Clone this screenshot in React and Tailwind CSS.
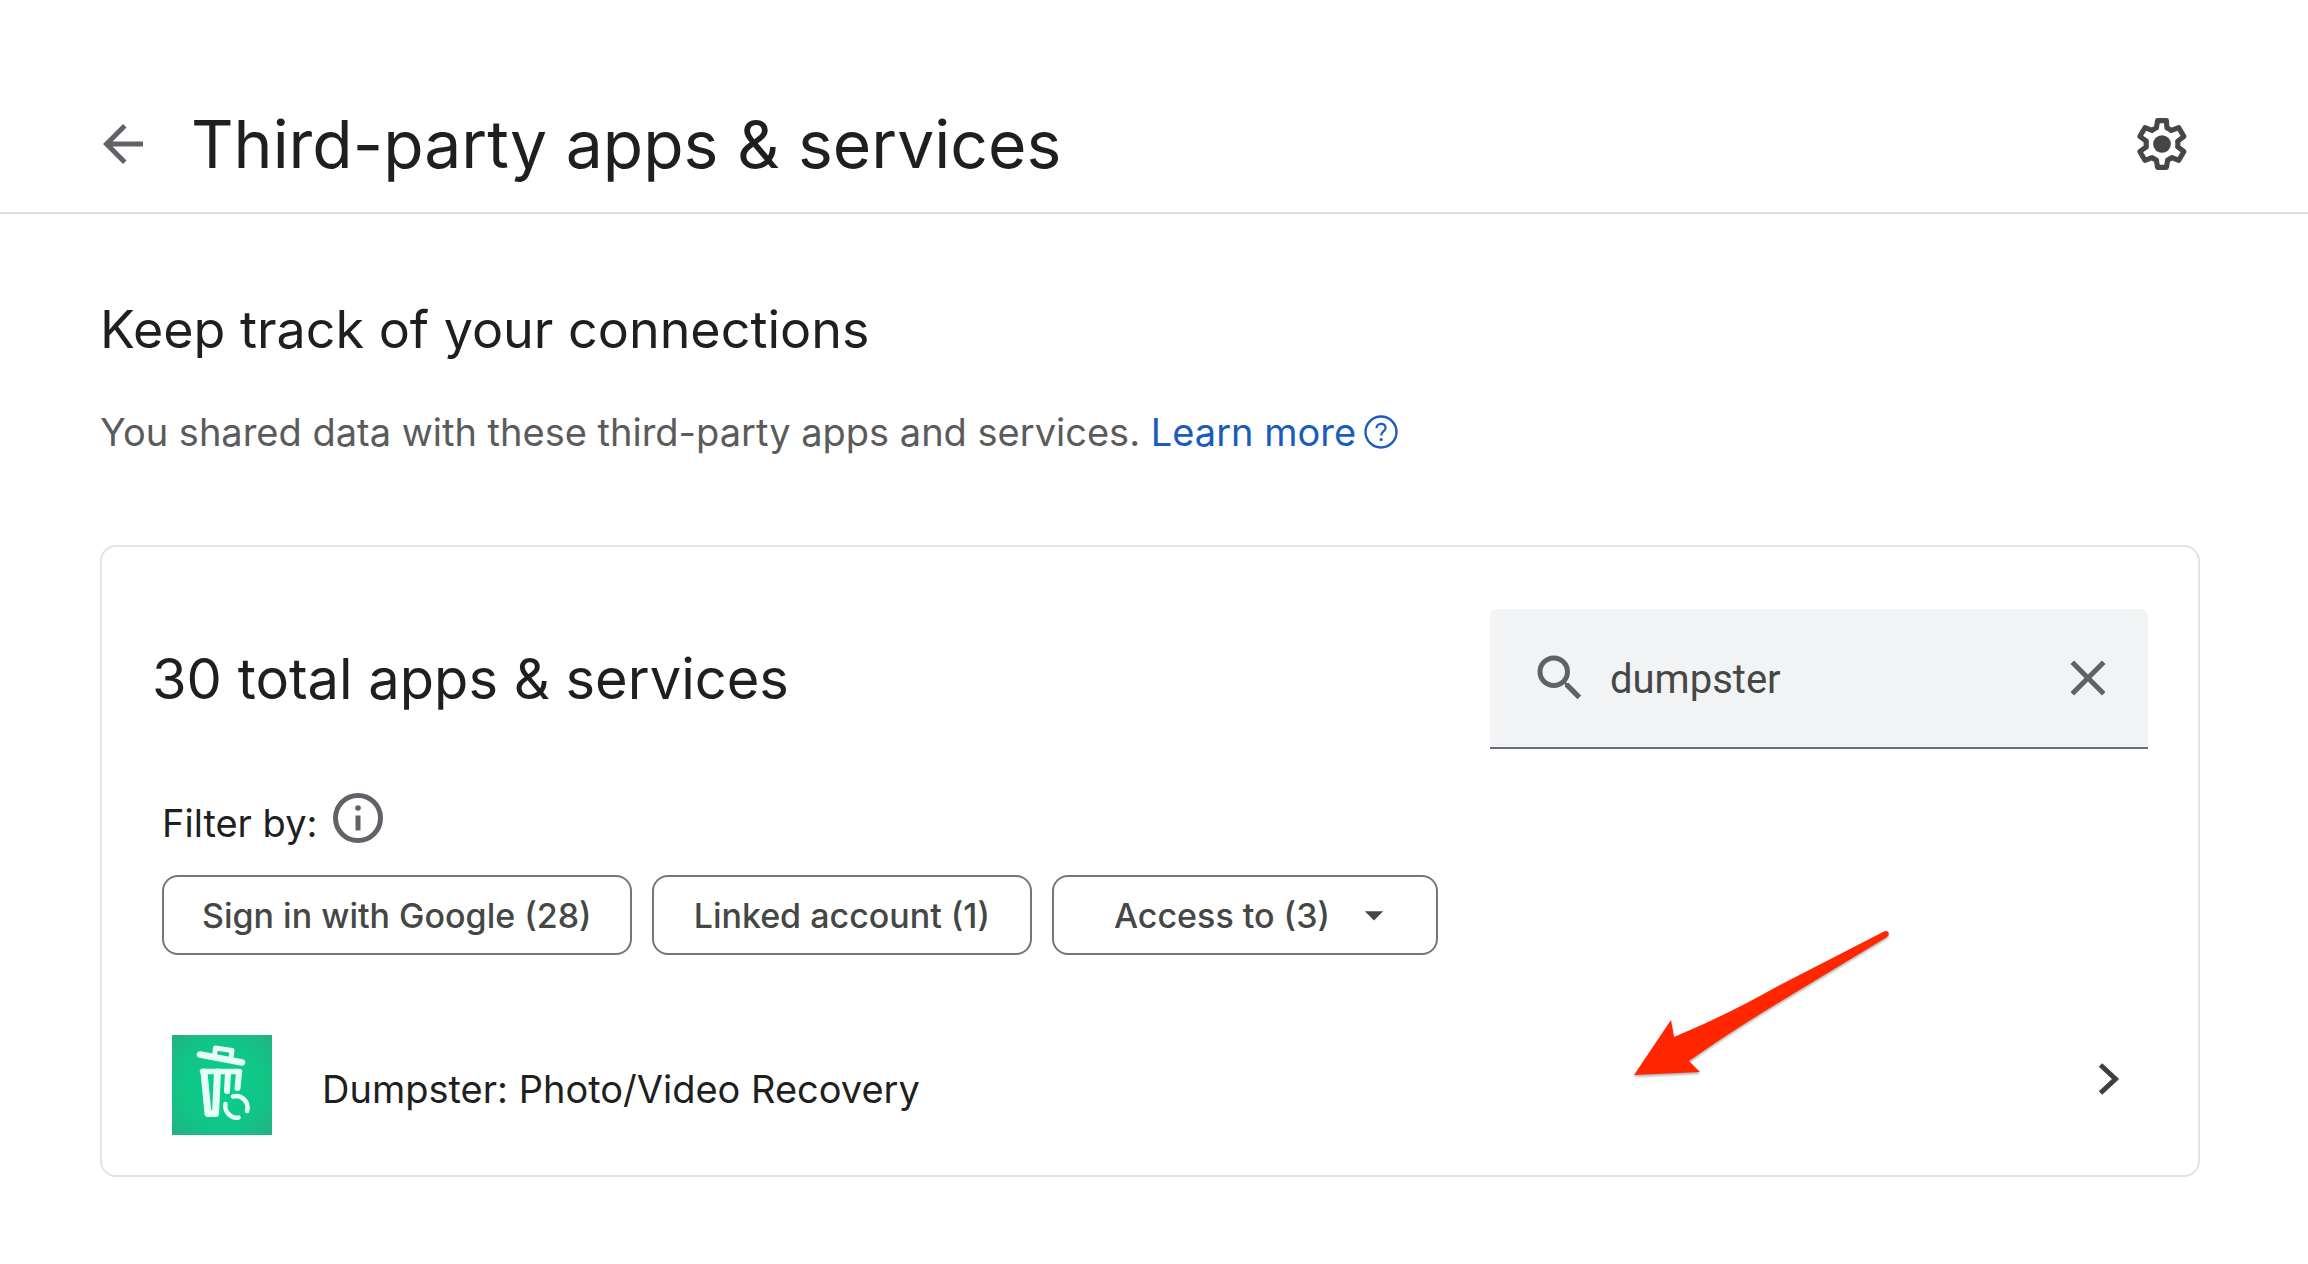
import React, { useState } from "react";
import { MdArrowBack, MdArrowDropDown, MdClose, MdSearch } from "react-icons/md";

function GearIcon() {
  return (
    <svg viewBox="0 0 24 24" className="h-14 w-14" aria-hidden="true">
      <path
        fill="none"
        stroke="currentColor"
        strokeWidth="2.2"
        strokeLinejoin="round"
        d="M18.7 13.2c.1-.4.1-.8.1-1.2s0-.8-.1-1.2l2.7-2-2.2-3.8-3.2 1.2c-.6-.5-1.2-.8-1.900-1.1L13.900 2h-3.800l-.5 3.100c-.7.3-1.300.6-1.900 1.100L4.700 5 2.500 8.800l2.800 2c-.1.400-.1.800-.1 1.200s0 .8.1 1.200l-2.800 2L4.700 19l3-1.200c.6.500 1.200.800 1.900 1.100l.5 3.100h3.800l.5-3.100c.7-.3 1.300-.6 1.900-1.100L19.200 19l2.200-3.800z"
      />
      <circle cx="12" cy="12" r="3.8" fill="currentColor" />
    </svg>
  );
}

function HelpIcon() {
  return (
    <svg viewBox="0 0 34 34" className="h-[34px] w-[34px]" fill="none" stroke="currentColor" aria-hidden="true">
      <circle cx="17" cy="17" r="15.500" strokeWidth="2.400" />
      <path d="M12.500 13.200c0-2.600 2-4.400 4.600-4.400s4.500 1.700 4.500 4c0 3.300-4.400 3.800-4.400 7.600" strokeWidth="2.200" />
      <circle cx="17.100" cy="24.600" r="1.600" fill="currentColor" stroke="none" />
    </svg>
  );
}

function InfoIcon() {
  return (
    <svg viewBox="0 0 50 50" className="h-[50px] w-[50px]" aria-hidden="true">
      <circle cx="25" cy="25" r="22.500" fill="none" stroke="currentColor" strokeWidth="5" />
      <circle cx="25" cy="15" r="2.800" fill="currentColor" />
      <rect x="22.500" y="22.500" width="5" height="15" fill="currentColor" />
    </svg>
  );
}

function DumpsterLogo() {
  return (
    <svg viewBox="0 0 100 100" className="h-[100px] w-[100px] shrink-0" aria-hidden="true">
      <defs>
        <radialGradient id="tile" cx="50%" cy="50%" r="70%">
          <stop offset="0%" stopColor="#08cf8c" />
          <stop offset="65%" stopColor="#12c486" />
          <stop offset="100%" stopColor="#25b083" />
        </radialGradient>
      </defs>
      <rect width="100" height="100" fill="url(#tile)" />
      <g fill="none" stroke="#e6fff6" strokeLinecap="round" strokeLinejoin="round">
        <path d="M28 19.500 70 27.500" strokeWidth="6.500" />
        <path d="M42.500 20 43.500 13 60 15.500 59 23" strokeWidth="5" />
        <path d="M30.500 36.500H67.500" strokeWidth="5.500" />
        <path d="M32 37 36 78.500H43.500L45.500 37" strokeWidth="7" />
        <path d="M56 38 55 56" strokeWidth="6" />
        <path d="M67 38 65.500 53" strokeWidth="6" />
        <path d="M61 61.500A11.500 11.500 0 0 1 75 76" strokeWidth="4.500" />
        <path d="M53.500 69A11.500 11.500 0 0 0 66.500 82.500" strokeWidth="4.500" />
      </g>
    </svg>
  );
}

function ChevronIcon() {
  return (
    <svg viewBox="0 0 22 34" className="h-[34px] w-[22px]" fill="none" stroke="currentColor" aria-hidden="true">
      <path d="M2.500 3 17.500 17 2.500 31" strokeWidth="5" />
    </svg>
  );
}

function PointerArrow() {
  return (
    <svg
      viewBox="1624 920 276 164"
      className="pointer-events-none absolute right-[298px] bottom-[90px] h-[164px] w-[276px] drop-shadow-[0_2px_1px_rgba(0,0,0,0.3)]"
      aria-hidden="true"
    >
      <path
        fill="#ff2600"
        d="M1634 1074 1671 1019 1674 1036Q1725 1015 1778 985L1884 930.500Q1887 929 1888.500 931.500 1889.500 934 1887 936L1778 1002Q1730 1031 1689 1060L1700 1071Z"
      />
    </svg>
  );
}

const chip =
  "flex h-20 items-center rounded-2xl border-2 border-[#747775] text-[34px] font-medium text-[#444746]";

export default function App() {
  const [query, setQuery] = useState("dumpster");

  return (
    <div className="bg-white font-['Inter',sans-serif] text-[#1f1f1f]">
      <header className="flex items-center border-b-2 border-[#dadce0] pt-[104px] pr-[118px] pb-7 pl-[93px]">
        <button type="button" aria-label="Back" className="text-[#5f6368]">
          <MdArrowBack size={60} />
        </button>
        <h1 className="ml-[38px] text-[66px] leading-[80px]">Third-party apps &amp; services</h1>
        <button type="button" aria-label="Settings" className="ml-auto text-[#444746]">
          <GearIcon />
        </button>
      </header>

      <main className="pt-[84px] pr-[108px] pb-[87px] pl-[100px]">
        <h2 className="text-[52px] leading-[64px]">Keep track of your connections</h2>
        <p className="mt-[46px] text-[38px] leading-[48px] text-[#5a5b5c]">
          You shared data with these third-party apps and services.{" "}
          <a href="#learn-more" className="inline-flex items-center gap-2 align-top text-[#1b5bbf]">
            Learn more
            <HelpIcon />
          </a>
        </p>

        <section className="relative mt-[89px] rounded-2xl border-2 border-[#e3e3e3] px-[50px] pt-[62px] pb-10">
          <div className="flex items-center justify-between">
            <h3 className="text-[56px] leading-[72px]">30 total apps &amp; services</h3>
            <div className="flex h-[140px] w-[658px] items-center rounded-t-lg border-b-2 border-[#6b6e72] bg-[#f1f3f4] pr-[30px] pl-10">
              <label htmlFor="app-search" aria-label="Search apps" className="text-[#5f6368]">
                <MdSearch size={60} />
              </label>
              <input
                id="app-search"
                type="text"
                value={query}
                onChange={(e) => setQuery(e.target.value)}
                className="ml-5 min-w-0 flex-1 bg-transparent pt-1 font-['Roboto',sans-serif] text-[40px] leading-[56px] text-[#444746] outline-none"
              />
              <button type="button" aria-label="Clear search" onClick={() => setQuery("")} className="text-[#5f6368]">
                <MdClose size={60} />
              </button>
            </div>
          </div>

          <div className="mt-11 flex items-start gap-4 pl-[10px]">
            <span className="text-[38px] leading-[60px]">Filter by:</span>
            <button type="button" aria-label="About filters" className="text-[#5f6368]">
              <InfoIcon />
            </button>
          </div>

          <div className="mt-[22px] flex gap-5 pl-[10px]">
            <button type="button" className={chip + " px-[38px]"}>Sign in with Google (28)</button>
            <button type="button" className={chip + " px-10"}>Linked account (1)</button>
            <button type="button" aria-haspopup="menu" className={chip + " gap-[22px] pr-[40px] pl-[60px]"}>
              Access to (3)
              <MdArrowDropDown size={44} />
            </button>
          </div>

          <a href="#dumpster" className="mt-20 flex items-center pr-7 pl-5">
            <DumpsterLogo />
            <span className="ml-[50px] pt-2 text-[38px] leading-[48px]">Dumpster: Photo/Video Recovery</span>
            <span className="ml-auto pb-3 text-[#3c4043]">
              <ChevronIcon />
            </span>
          </a>

          <PointerArrow />
        </section>
      </main>
    </div>
  );
}
